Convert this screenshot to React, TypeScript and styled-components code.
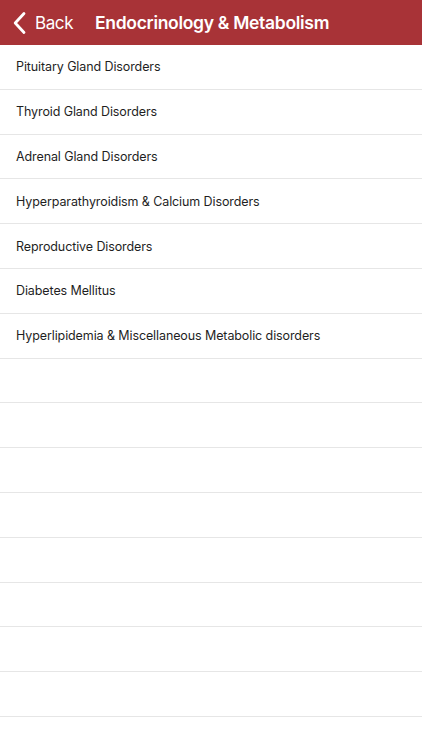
import React from "react"
import styled, { createGlobalStyle } from "styled-components"

const GlobalStyle = createGlobalStyle`
    html, body {
        margin:0;
        padding:0;
        background:#fff;
        font-family:Inter, "Liberation Sans", sans-serif;
    }
`
const Page = styled.div`
    width:422px;
    height:750px;
    overflow:hidden;
    background:#fff;
`
const NavBar = styled.div`
    height:45px;
    background:#a83337;
    display:flex;
    align-items:center;
    color:#fff;
`
const BackButton = styled.div`
    display:flex;
    align-items:center;
    padding-left:12px;
    gap:8px;
    font-size:17px;
    letter-spacing:-0.4px;
    width:83px;
`
const Title = styled.div`
    font-weight:600;
    font-size:17.5px;
    letter-spacing:-0.3px;
`
const List = styled.div`
    display:flex;
    flex-direction:column;
`
const Row = styled.div`
    height:43.8px;
    border-bottom:1px solid #e6e6e6;
    display:flex;
    align-items:center;
    padding-left:16px;
    font-size:12.5px;
    letter-spacing:-0.1px;
    color:#1f1f1f;
    flex-shrink:0;
`

const items = [
    "Pituitary Gland Disorders",
    "Thyroid Gland Disorders",
    "Adrenal Gland Disorders",
    "Hyperparathyroidism & Calcium Disorders",
    "Reproductive Disorders",
    "Diabetes Mellitus",
    "Hyperlipidemia & Miscellaneous Metabolic disorders",
]

const App: React.FC = () => {
    const rows = [...items, ...Array(9).fill("")]
    return (
        <Page>
            <GlobalStyle />
            <NavBar>
                <BackButton>
                    <svg width="15" height="24" viewBox="0 0 15 24">
                        <path d="M12 2.5 L3.2 12 L12 21.5" fill="none" stroke="#fff" strokeWidth="2.8" strokeLinecap="round" strokeLinejoin="round" />
                    </svg>
                    <span>Back</span>
                </BackButton>
                <Title>Endocrinology &amp; Metabolism</Title>
            </NavBar>
            <List>
                {rows.map((r, i) => (
                    <Row key={i}>{r}</Row>
                ))}
            </List>
        </Page>
    )
}
export default App
